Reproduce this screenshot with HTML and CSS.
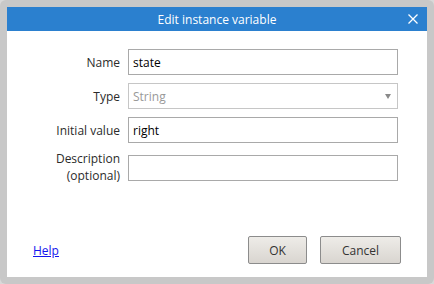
FILE: index.html
```html
<!DOCTYPE html>
<html lang="en">

<head>
    <meta charset="UTF-8">
    <title>Edit instance variable</title>
    <link rel="stylesheet" href="styles.css">
</head>

<body>
    <div class="frame">
        <div class="dialog">
            <div class="titlebar">
                <span class="title">Edit instance variable</span>
                <button class="close" aria-label="Close">
                    <svg width="10" height="10" viewBox="0 0 10 10">
                        <path d="M0.5 0.5 L9.5 9.5 M9.5 0.5 L0.5 9.5" stroke="#fff" stroke-width="1.3" fill="none" />
                    </svg>
                </button>
            </div>
            <div class="content">
                <div class="field">
                    <label for="name">Name</label>
                    <input type="text" id="name" value="state">
                </div>
                <div class="field">
                    <label>Type</label>
                    <div class="select"><span>String</span><span class="arrow"></span></div>
                </div>
                <div class="field">
                    <label for="initial">Initial value</label>
                    <input type="text" id="initial" value="right">
                </div>
                <div class="field field-desc">
                    <label for="desc">Description<br>(optional)</label>
                    <input type="text" id="desc" value="">
                </div>
            </div>
            <div class="footer">
                <a href="#" class="help">Help</a>
                <div class="buttons">
                    <button class="btn btn-ok">OK</button>
                    <button class="btn btn-cancel">Cancel</button>
                </div>
            </div>
        </div>
    </div>
</body>

</html>
```

FILE: styles.css
```css
html {
    background: #d9d9d9;
}

body {
    margin: 0;
    font-family: "Open Sans", Arial, sans-serif;
    font-size: 12px;
    color: #2b2b2b;
}

.frame {
    width: 434px;
    height: 284px;
    box-sizing: border-box;
    padding: 7px;
    background: #c8c8c8;
    border-radius: 6px;
}

.dialog {
    height: 100%;
    background: #fff;
    display: flex;
    flex-direction: column;
}

.titlebar {
    height: 24px;
    background: #2b80cf;
    color: #fff;
    display: flex;
    align-items: center;
    justify-content: center;
    position: relative;
}

.title {
    font-size: 12px;
}

.close {
    position: absolute;
    right: 8px;
    top: 6px;
    width: 12px;
    height: 12px;
    padding: 1px;
    border: 0;
    background: none;
    display: flex;
}

.content {
    padding-top: 18px;
}

.field {
    display: flex;
    align-items: center;
    gap: 8px;
    margin-bottom: 8px;
}

.field label {
    width: 113px;
    text-align: right;
}

.field input,
.select {
    width: 270px;
    height: 26px;
    box-sizing: border-box;
    margin: 0;
    border: 1px solid #a9a9a9;
    padding: 0 4px;
    font-family: inherit;
    font-size: 12px;
    color: #000;
    outline: none;
}

.select {
    border-color: #c6c6c6;
    color: #999;
    display: flex;
    align-items: center;
    justify-content: space-between;
    padding-right: 6px;
}

.arrow {
    width: 0;
    height: 0;
    border-left: 3px solid transparent;
    border-right: 3px solid transparent;
    border-top: 5px solid #8a8a8a;
    margin-top: 1px;
}

.field-desc label {
    line-height: 16.5px;
}

.footer {
    margin-top: auto;
    padding: 0 26px 13px 26px;
    display: flex;
    align-items: center;
    justify-content: space-between;
}

.help {
    color: #1414ee;
    text-decoration: underline;
}

.buttons {
    display: flex;
    gap: 13px;
}

.btn {
    height: 28px;
    border: 1px solid #8c8c8c;
    border-radius: 2px;
    background: linear-gradient(#eeece8, #d9d5d0);
    font-family: inherit;
    font-size: 12px;
    color: #333;
    padding: 0;
}

.btn-ok {
    width: 59px;
}

.btn-cancel {
    width: 81px;
}
```
